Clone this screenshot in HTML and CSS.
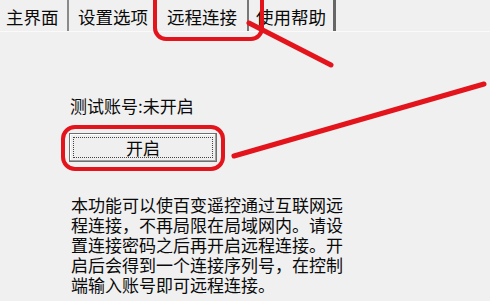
FILE: index.html
```html
<!DOCTYPE html>
<html lang="zh">
<head>
<meta charset="utf-8">
<link rel="stylesheet" href="styles.css">
</head>
<body>
<div class="window">
  <div class="tabs">
    <div class="tab t1">主界面</div>
    <div class="tab t2">设置选项</div>
    <div class="tab t3 active">远程连接</div>
    <div class="tab t4">使用帮助</div>
  </div>
  <div class="content">
    <div class="status">测试账号:未开启</div>
    <button class="btn"><span class="focus">开启</span></button>
    <p class="desc">本功能可以使百变遥控通过互联网远<br>程连接，不再局限在局域网内。请设<br>置连接密码之后再开启远程连接。开<br>启后会得到一个连接序列号，在控制<br>端输入账号即可远程连接。</p>
  </div>
  <svg class="marks" width="490" height="301" viewBox="0 0 490 301">
    <rect x="155" y="-20" width="107" height="59" rx="11" fill="none" stroke="#e3141c" stroke-width="4"/>
    <line x1="249" y1="23" x2="331" y2="65" stroke="#e3141c" stroke-width="5" stroke-linecap="round"/>
    <rect x="63" y="127" width="160" height="42" rx="12" fill="none" stroke="#e3141c" stroke-width="4"/>
    <line x1="234" y1="156" x2="484" y2="84" stroke="#e3141c" stroke-width="5" stroke-linecap="round"/>
  </svg>
</div>
</body>
</html>
```
FILE: styles.css
```css
html, body {
  margin: 0;
  padding: 0;
  background: #f0f0f0;
}
.window {
  position: relative;
  width: 490px;
  height: 301px;
  overflow: hidden;
  background: #f0f0f0;
  font-family: "Noto Sans CJK SC", "Noto Sans", sans-serif;
  color: #0a0a0a;
}
.tabs {
  display: flex;
  height: 31px;
  border-bottom: 1px solid #fafafa;
  box-sizing: content-box;
}
.tab {
  font-size: 17.5px;
  line-height: 24px;
  padding-top: 5px;
  height: 26px;
  box-sizing: content-box;
  white-space: nowrap;
}
.t1 {
  padding-left: 6px;
  width: 61px;
  border-right: 2px solid #8a8a8a;
}
.t2 {
  padding-left: 9px;
  width: 78px;
}
.t3 {
  padding-left: 11px;
  width: 80px;
  border-right: 2px solid #777;
}
.t4 {
  padding-left: 7px;
  width: 77px;
  border-right: 3px solid #666;
}
.content {
  padding: 64px 0 0 70px;
}
.status {
  font-size: 17px;
  line-height: 20px;
  margin: 0;
}
.btn {
  display: block;
  margin: 17px 0 0 -1px;
  width: 148px;
  height: 29px;
  padding: 3px;
  background: #efefef;
  border: 1px solid #6f6f6f;
  box-shadow: inset -1px -1px 0 #a0a0a0, inset 1px 1px 0 #fff;
  font-family: inherit;
  color: #0a0a0a;
  box-sizing: border-box;
}
.focus {
  display: block;
  height: 100%;
  border: 1px dotted #444;
  box-sizing: border-box;
  font-size: 17px;
  line-height: 19px;
}
.desc {
  margin: 33px 0 0 1px;
  font-size: 17px;
  line-height: 20px;
}
.marks {
  position: absolute;
  left: 0;
  top: 0;
}
```
